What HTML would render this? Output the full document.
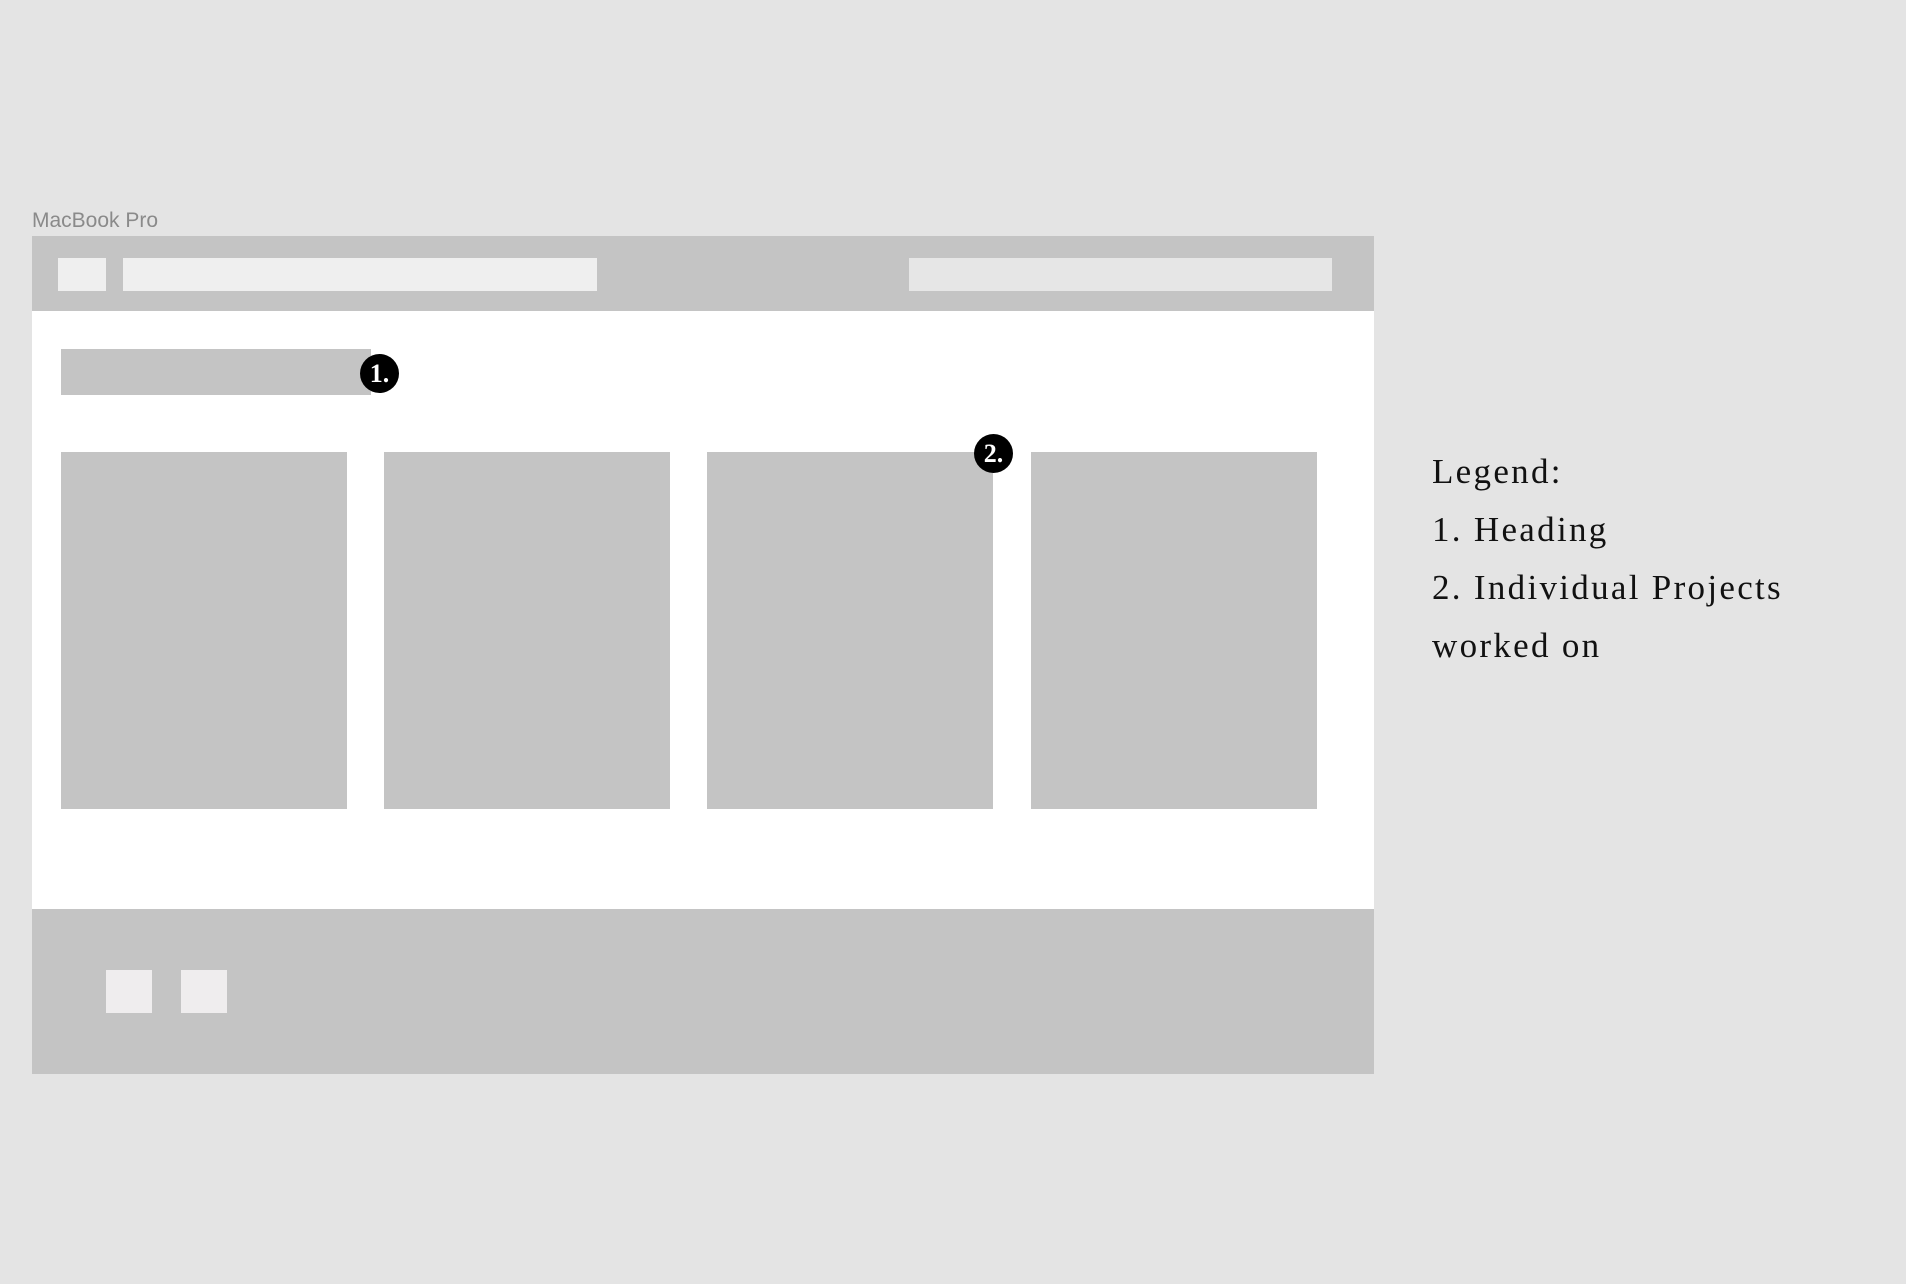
<!DOCTYPE html>
<html><head><meta charset="utf-8"><style>
html,body{margin:0;padding:0}
body{width:1906px;height:1284px;background:#e4e4e4;position:relative;overflow:hidden;font-family:"Liberation Sans",sans-serif}
.a{position:absolute}
.g{background:#c4c4c4}
.badge{position:absolute;width:39px;height:39px;border-radius:50%;background:#000;color:#fff;font-family:"Liberation Serif",serif;font-size:26px;line-height:39px;text-align:center;font-weight:bold}
.leg{position:absolute;left:1432px;font-family:"Liberation Serif",serif;font-size:35px;letter-spacing:2.3px;color:#111;line-height:58px;top:443px}
</style></head><body>
<div class="a" style="left:32px;top:209px;font-size:21px;color:#8a8a8a">MacBook Pro</div>
<div class="a g" style="left:32px;top:236px;width:1342px;height:76px"></div>
<div class="a" style="left:58px;top:258px;width:48px;height:33px;background:#efefef"></div>
<div class="a" style="left:123px;top:258px;width:474px;height:33px;background:#efefef"></div>
<div class="a" style="left:909px;top:258px;width:423px;height:33px;background:#e6e6e6"></div>
<div class="a" style="left:32px;top:311px;width:1342px;height:598px;background:#fff"></div>
<div class="a g" style="left:61px;top:349px;width:310px;height:46px"></div>
<div class="badge" style="left:360px;top:354px">1.</div>
<div class="a g" style="left:61px;top:452px;width:286px;height:357px"></div>
<div class="a g" style="left:384px;top:452px;width:286px;height:357px"></div>
<div class="a g" style="left:707px;top:452px;width:286px;height:357px"></div>
<div class="a g" style="left:1031px;top:452px;width:286px;height:357px"></div>
<div class="badge" style="left:974px;top:434px">2.</div>
<div class="a g" style="left:32px;top:909px;width:1342px;height:165px"></div>
<div class="a" style="left:106px;top:970px;width:46px;height:43px;background:#efedee"></div>
<div class="a" style="left:181px;top:970px;width:46px;height:43px;background:#efedee"></div>
<div class="leg">Legend:<br>1. Heading<br>2. Individual Projects<br>worked on</div>
</body></html>
